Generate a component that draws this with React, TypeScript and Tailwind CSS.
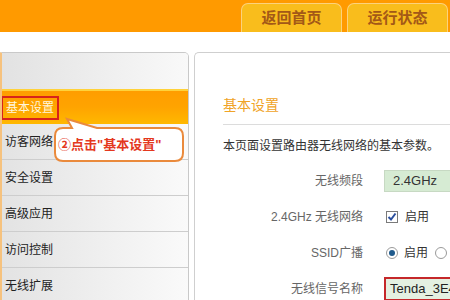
import React from 'react'

const cjk = {fontFamily: '"Liberation Sans", "Noto Sans CJK SC", sans-serif'}

const menu = ['访客网络', '安全设置', '高级应用', '访问控制', '无线扩展']

const Tab = ({label}: { label: string }) => (
    <div
        className="w-[101px] h-[29px] rounded-t-[7px] border border-b-0 border-[#fcd27c] bg-[#f9bd1c] flex items-center justify-center text-[15px] font-bold text-[#a35817]">
        {label}
    </div>
)

const Sidebar = () => (
    <div className="w-[189px] shrink-0 border border-[#c9c9c9] border-l-2 border-l-[#f6c27e] rounded-tr-[5px] overflow-hidden">
        <div className="h-[36px] bg-gradient-to-r from-[#e2e2e2] to-[#f9f9f9]"></div>
        <div className="h-[35px] bg-gradient-to-b from-[#ff9d00] via-[#ffa400] to-[#ffb800] border-t-2 border-[#ffd23a] flex items-center">
            <span className="ml-[-1px] px-[3px] h-[24px] flex items-center border-2 border-[#d8231b] text-[12px] text-[#fff6dc]">基本设置</span>
        </div>
        {menu.map((m) => (
            <div key={m}
                 className="h-[36px] border-b border-[#cdcdcd] bg-gradient-to-r from-[#e3e3e3] to-[#fafafa] flex items-center pl-[3px] text-[12px] text-[#222]">
                {m}
            </div>
        ))}
    </div>
)

const Row = ({label, children}: { label: string, children: React.ReactNode }) => (
    <div className="h-[36px] flex items-center">
        <div className="w-[140px] shrink-0 text-right text-[12px] text-[#666]">{label}</div>
        <div className="ml-[21px] flex items-center text-[12px] text-[#333]">{children}</div>
    </div>
)

const Radio = ({on}: { on?: boolean }) => (
    <span className="w-[12px] h-[12px] rounded-full border border-[#9a9a9a] bg-white flex items-center justify-center">
        {on && <span className="w-[6px] h-[6px] rounded-full bg-[#1f5a8c]"></span>}
    </span>
)

const Panel = () => (
    <div className="w-[400px] shrink-0 border-l border-t border-[#cfcfcf] rounded-tl-[5px] pl-[28px] pt-[38px]">
        <div className="text-[14px] text-[#f0a326] leading-[28px]">基本设置</div>
        <div className="mt-[5px] border-t border-[#dcdcdc]"></div>
        <div className="mt-[12px] text-[12px] text-[#333] leading-[18px] whitespace-nowrap">本页面设置路由器无线网络的基本参数。</div>
        <div className="mt-[8px]">
            <Row label="无线频段">
                <div
                    className="w-[120px] h-[22px] border border-[#c7d9c3] bg-[#d6ebd3] flex items-center pl-[8px] text-[13px] text-[#333]">2.4GHz
                </div>
            </Row>
            <Row label="2.4GHz 无线网络">
                <span
                    className="ml-[2px] w-[12px] h-[12px] border border-[#7a7a7a] bg-white flex items-center justify-center">
                    <svg width="10" height="10" viewBox="0 0 10 10">
                        <path d="M1.5 5 L4 7.5 L8.5 1.5" fill="none" stroke="#2b4f9e" strokeWidth="2"/>
                    </svg>
                </span>
                <span className="ml-[7px]">启用</span>
            </Row>
            <Row label="SSID广播">
                <span className="ml-[2px]"><Radio on/></span>
                <span className="ml-[6px]">启用</span>
                <span className="ml-[7px]"><Radio/></span>
            </Row>
            <Row label="无线信号名称">
                <div
                    className="w-[120px] h-[24px] border-2 border-[#c5282a] bg-[#e4f0e1] flex items-center pl-[4px] text-[13px] text-[#222] whitespace-nowrap">Tenda_3E4
                </div>
            </Row>
        </div>
    </div>
)

export default function App() {
    return (
        <div className="w-[450px] h-[300px] overflow-hidden bg-white relative" style={cjk}>
            <div className="h-[32px] bg-[#ff9a00] flex items-end justify-end gap-[5px] pr-[2px]">
                <Tab label="返回首页"/>
                <Tab label="运行状态"/>
            </div>
            <div className="mt-[20px] flex gap-[5px]">
                <Sidebar/>
                <Panel/>
            </div>
            {/* callout */}
            <svg className="absolute left-[50px] top-[114px]" width="140" height="52" viewBox="0 0 140 52">
                <path
                    d="M13 14 L22 14 L17 5 L47 14 L125 14 Q133 14 133 22 L133 39 Q133 47 125 47 L13 47 Q5 47 5 39 L5 22 Q5 14 13 14 Z"
                    fill="#fff" stroke="#ea8a3c" strokeWidth="2"/>
            </svg>
            <div
                className="absolute left-[58px] top-[136px] text-[13px] font-bold text-[#e4381e] whitespace-nowrap leading-[18px]">②点击"基本设置"
            </div>
        </div>
    )
}
